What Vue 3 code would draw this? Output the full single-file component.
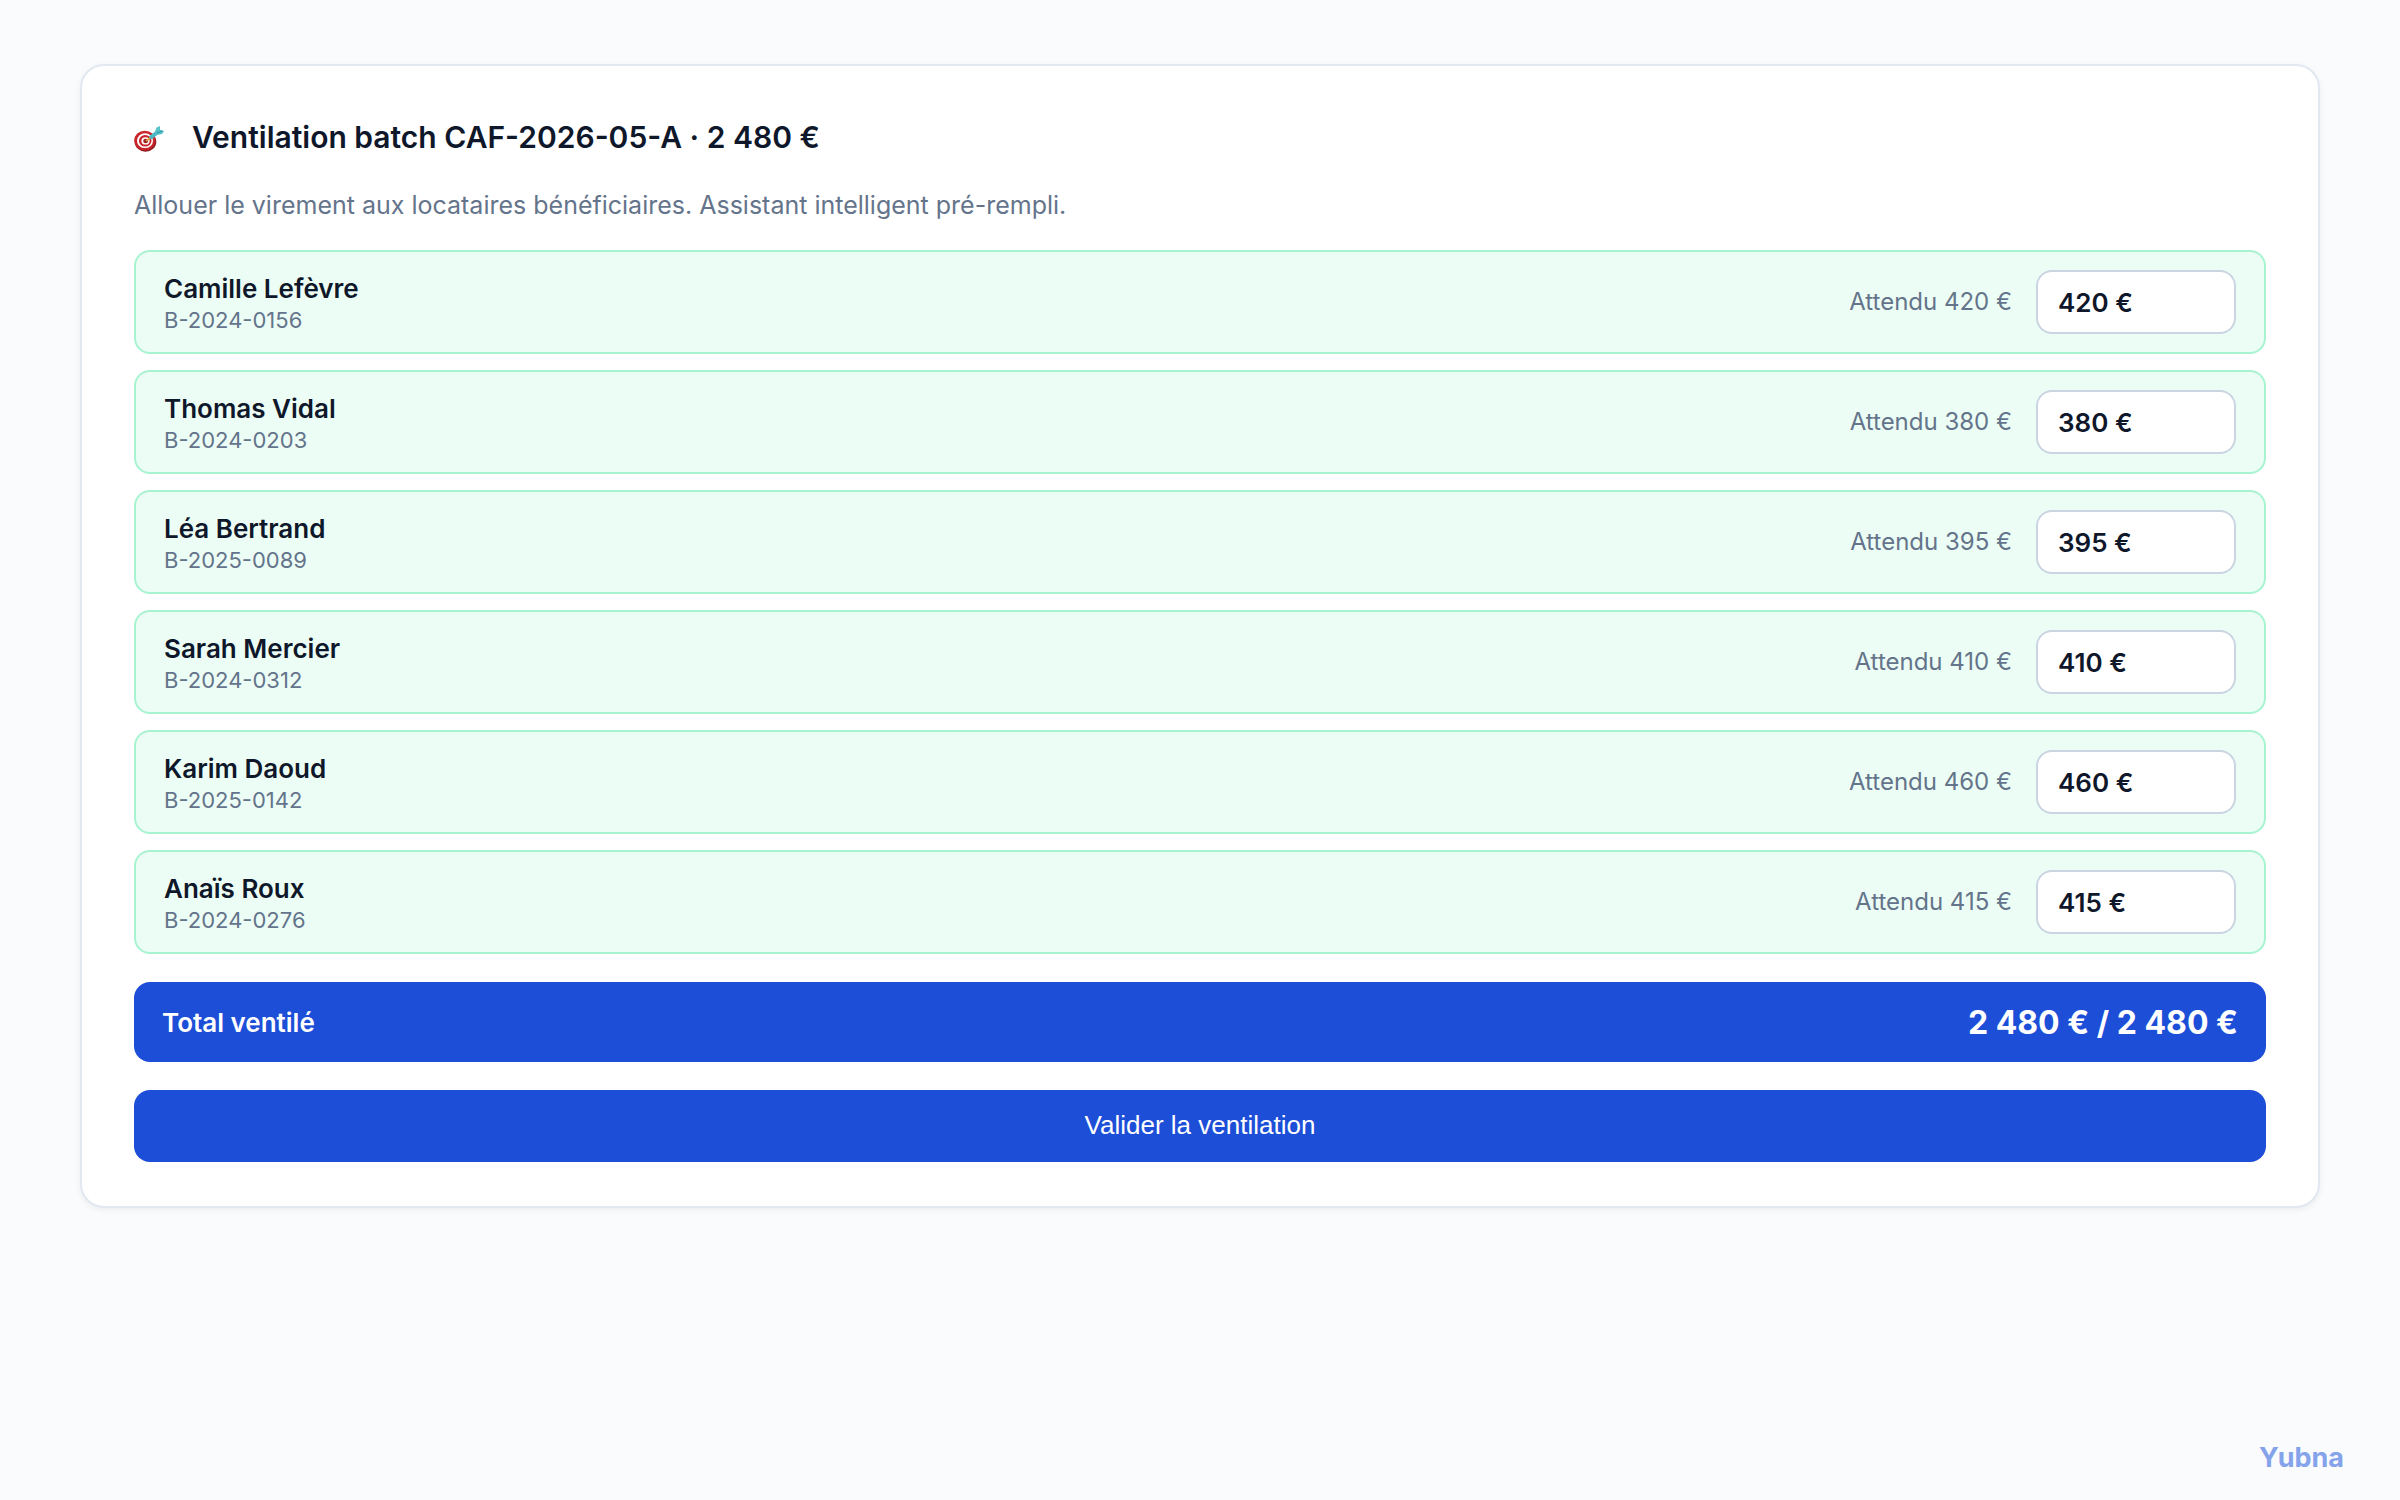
<script setup>
import { reactive } from 'vue'

const tenants = reactive([
  { name: 'Camille Lefèvre', lease: 'B-2024-0156', expected: 420, amount: '420 €' },
  { name: 'Thomas Vidal', lease: 'B-2024-0203', expected: 380, amount: '380 €' },
  { name: 'Léa Bertrand', lease: 'B-2025-0089', expected: 395, amount: '395 €' },
  { name: 'Sarah Mercier', lease: 'B-2024-0312', expected: 410, amount: '410 €' },
  { name: 'Karim Daoud', lease: 'B-2025-0142', expected: 460, amount: '460 €' },
  { name: 'Anaïs Roux', lease: 'B-2024-0276', expected: 415, amount: '415 €' },
])
</script>

<template>
  <div class="page">
    <main class="card">
      <header class="heading">
        <svg class="target" viewBox="0 0 30 26" aria-hidden="true">
          <ellipse cx="11.500" cy="15.800" rx="10.800" ry="10" fill="#8f1a1f" />
          <ellipse cx="10.800" cy="14.500" rx="10.600" ry="9.800" fill="#c9252b" />
          <ellipse cx="11" cy="14.700" rx="8" ry="7.400" fill="#fff" />
          <ellipse cx="11.200" cy="14.800" rx="6.300" ry="5.800" fill="#c9252b" />
          <ellipse cx="11.500" cy="14.900" rx="4.100" ry="3.700" fill="#fff" />
          <ellipse cx="11.700" cy="15" rx="2.500" ry="2.300" fill="#9c2024" />
          <path d="M12 15 17.500 11" stroke="#d9a441" stroke-width="1.600" />
          <path d="M16 12 24 5.800" stroke="#4bb9c2" stroke-width="4" />
          <path d="M20.500 7 22.500 1.500 26 0 26 3.800 30 5 28 8 23 9Z" fill="#56c3ca" />
          <path d="M22.500 7 28.500 5" stroke="#318f9b" stroke-width="1" />
        </svg>
        <h1>Ventilation batch CAF-2026-05-A · 2&nbsp;480&nbsp;€</h1>
      </header>
      <p class="intro">Allouer le virement aux locataires bénéficiaires. Assistant intelligent pré-rempli.</p>

      <ul class="tenants">
        <li v-for="(tenant, i) in tenants" :key="tenant.lease" class="tenant">
          <div class="identity">
            <label class="name" :for="`amount-${i}`">{{ tenant.name }}</label>
            <span class="lease">{{ tenant.lease }}</span>
          </div>
          <span class="expected">Attendu {{ tenant.expected }}&nbsp;€</span>
          <input :id="`amount-${i}`" v-model="tenant.amount" class="amount" type="text" />
        </li>
      </ul>

      <div class="total">
        <span>Total ventilé</span>
        <strong>2&nbsp;480&nbsp;€ / 2&nbsp;480&nbsp;€</strong>
      </div>

      <button class="submit" type="button">Valider la ventilation</button>
    </main>
    <div class="brand">Yubna</div>
  </div>
</template>

<style>
body {
  background: #fafbfd;
}
</style>

<style scoped>
.page {
  box-sizing: border-box;
  min-height: 100vh;
  display: flex;
  flex-direction: column;
  justify-content: space-between;
  padding: 64px 80px 24px;
  color: #0f172a;
  font-family: Inter, "Liberation Sans", sans-serif;
}

.card {
  padding: 44px 52px;
  border: 2px solid #e2e8f0;
  border-radius: 24px;
  background: #fff;
  box-shadow: 0 2px 6px rgba(15, 23, 42, 0.06);
}

.heading {
  display: flex;
  align-items: center;
  gap: 28px;
}

.target {
  width: 30px;
  height: 26px;
  margin-top: 4px;
}

h1 {
  margin: 0;
  font-size: 30px;
  line-height: 54px;
  font-weight: 600;
}

.intro {
  margin: 21px 0 25px;
  color: #64748b;
  font-size: 25px;
  line-height: 40px;
}

.tenants {
  display: flex;
  flex-direction: column;
  gap: 16px;
  margin: 0;
  padding: 0;
  list-style: none;
}

.tenant {
  display: flex;
  align-items: center;
  gap: 24px;
  padding: 16px 28px;
  border: 2px solid #a7f3d0;
  border-radius: 16px;
  background: #ecfdf5;
}

.identity {
  flex: 1;
  display: flex;
  flex-direction: column;
  padding-top: 6px;
}

.name {
  font-size: 26px;
  line-height: 30px;
  font-weight: 600;
}

.lease {
  color: #64748b;
  font-size: 22px;
  line-height: 32px;
}

.expected {
  color: #64748b;
  font-size: 24px;
  line-height: 30px;
}

.amount {
  box-sizing: border-box;
  width: 200px;
  height: 64px;
  padding: 0 20px;
  border: 2px solid #cbd5e1;
  border-radius: 16px;
  background: #fff;
  color: #0f172a;
  font: 600 26px Inter, "Liberation Sans", sans-serif;
}

.total {
  display: flex;
  align-items: center;
  justify-content: space-between;
  margin: 28px 0;
  padding: 21px 28px 19px;
  border-radius: 16px;
  background: #1d4ed8;
  color: #fff;
  font-size: 26px;
  line-height: 40px;
  font-weight: 600;
}

.total strong {
  font-size: 32px;
  font-weight: 700;
}

.submit {
  display: block;
  width: 100%;
  height: 72px;
  padding: 0 0 2px;
  border: 0;
  border-radius: 16px;
  background: #1d4ed8;
  color: #fff;
  font: 26px "Liberation Sans", Arial, sans-serif;
}

.brand {
  align-self: flex-end;
  margin-right: -24px;
  color: #85a3ea;
  font-size: 27px;
  line-height: 36px;
  font-weight: 700;
}
</style>
